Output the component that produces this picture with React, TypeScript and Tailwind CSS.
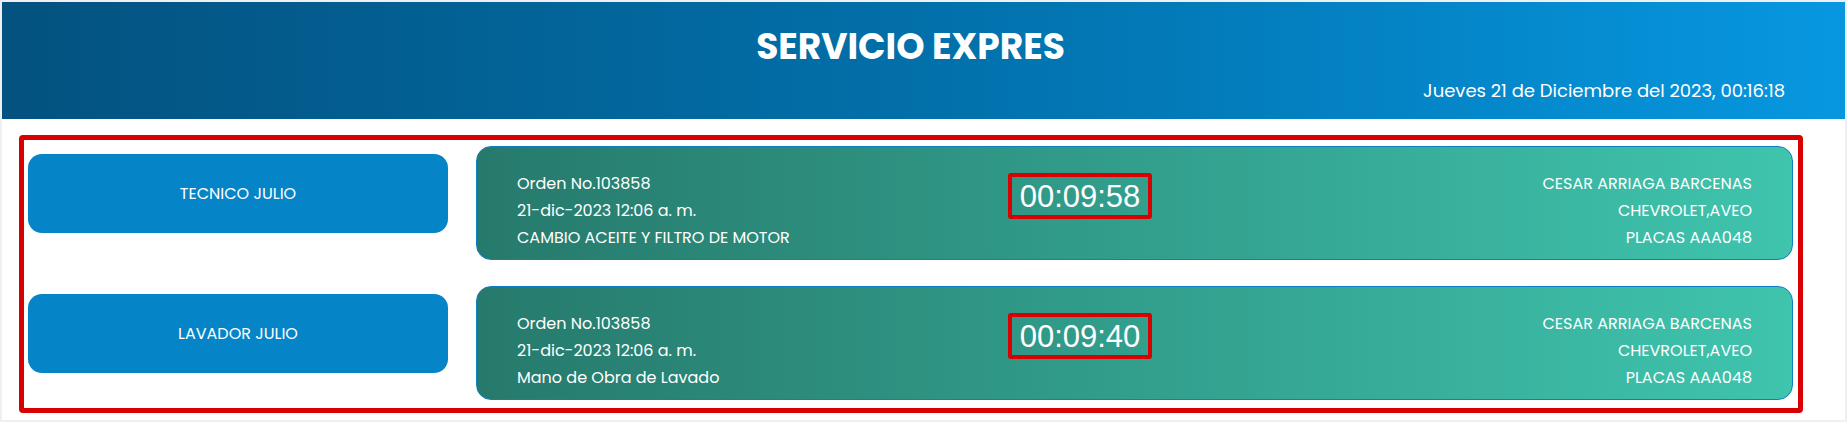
import React from "react";

type Orden = {
  empleado: string;
  orden: string;
  fecha: string;
  servicio: string;
  tiempo: string;
  cliente: string;
  vehiculo: string;
  placas: string;
};

const ordenes: Orden[] = [
  {
    empleado: "TECNICO JULIO",
    orden: "Orden No.103858",
    fecha: "21-dic-2023 12:06 a. m.",
    servicio: "CAMBIO ACEITE Y FILTRO DE MOTOR",
    tiempo: "00:09:58",
    cliente: "CESAR ARRIAGA BARCENAS",
    vehiculo: "CHEVROLET,AVEO",
    placas: "PLACAS AAA048",
  },
  {
    empleado: "LAVADOR JULIO",
    orden: "Orden No.103858",
    fecha: "21-dic-2023 12:06 a. m.",
    servicio: "Mano de Obra de Lavado",
    tiempo: "00:09:40",
    cliente: "CESAR ARRIAGA BARCENAS",
    vehiculo: "CHEVROLET,AVEO",
    placas: "PLACAS AAA048",
  },
];

const FilaOrden = ({ o }: { o: Orden }) => (
  <div className="flex items-start gap-[28px]">
    <div className="mt-[8px] flex h-[79px] w-[420px] shrink-0 items-center justify-center rounded-[14px] bg-[#0584c7] text-[16px] text-white">
      {o.empleado}
    </div>
    <div className="flex flex-1 items-start rounded-[15px] border border-[#0b80c4] bg-linear-to-r from-[#267a6c] to-[#3fc4ae] px-[40px] pt-[23px] pb-[8px] text-[16px] leading-[27px] text-white">
      <div className="w-[491px] shrink-0">
        <p>{o.orden}</p>
        <p>{o.fecha}</p>
        <p>{o.servicio}</p>
      </div>
      <div className="mt-[3px] flex h-[46px] w-[144px] shrink-0 items-center justify-center rounded-[3px] border-4 border-[#d80000] font-['Liberation_Sans',sans-serif] text-[31px] leading-none">
        {o.tiempo}
      </div>
      <div className="flex-1 text-right">
        <p>{o.cliente}</p>
        <p>{o.vehiculo}</p>
        <p>{o.placas}</p>
      </div>
    </div>
  </div>
);

export default function App() {
  return (
    <div className="min-h-screen bg-[#eef0f4] p-[2px] font-['Poppins','Open_Sans',sans-serif]">
      <header className="flex h-[117px] flex-col bg-linear-to-r from-[#03527f] via-[#0270aa] to-[#0797e0] text-white">
        <h1 className="pt-[21px] pr-[26px] text-center text-[36px] leading-[48px] font-bold">
          SERVICIO EXPRES
        </h1>
        <div className="mt-auto pr-[60px] pb-[16px] text-right text-[18px] leading-[24px]">
          Jueves 21 de Diciembre del 2023, 00:16:18
        </div>
      </header>
      <main className="bg-white pt-[16px] pr-[42px] pb-[7px] pl-[17px]">
        <div className="flex flex-col gap-[26px] rounded-sm border-[5px] border-[#d80000] pt-[6px] pr-[5px] pb-[8px] pl-[4px]">
          {ordenes.map((o, i) => (
            <FilaOrden key={i} o={o} />
          ))}
        </div>
      </main>
    </div>
  );
}
